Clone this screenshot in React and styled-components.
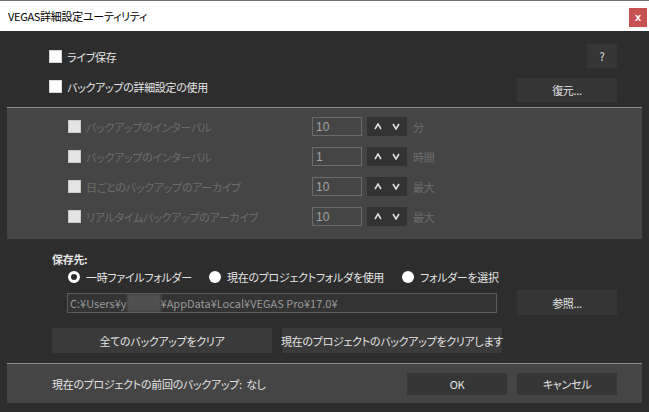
import React from "react";
import styled, { createGlobalStyle } from "styled-components";

const GlobalStyle = createGlobalStyle`
    html, body {
        margin: 0;
        padding: 0;
        background: #2d2d2d;
    }
    body {
        font-family: "Noto Sans CJK JP", "Noto Sans", sans-serif;
        font-size: 11px;
        letter-spacing: -0.3px;
        font-feature-settings: "palt";
    }
`

const Window = styled.div`
    width: 649px;
    height: 412px;
    box-sizing: border-box;
    border-top: 1px solid #717171;
    display: flex;
    flex-direction: column;
    background: #2d2d2d;
    overflow: hidden;
`

const TitleBar = styled.div`
    height: 30px;
    flex: none;
    background: #fff;
    display: flex;
    justify-content: space-between;
    align-items: flex-start;
    padding: 0 2px 0 8px;
`

const Title = styled.span`
    color: #000;
    line-height: 30px;
`

const CloseButton = styled.div`
    margin-top: 7px;
    width: 18px;
    height: 19px;
    background: #c75050;
    color: #fff;
    font-family: "Liberation Sans", sans-serif;
    font-weight: bold;
    font-size: 11px;
    display: flex;
    align-items: center;
    justify-content: center;
    padding-bottom: 2px;
    box-sizing: border-box;
`

const Content = styled.div`
    flex: 1;
    display: flex;
    flex-direction: column;
    padding-top: 13px;
`

const TopRow = styled.div`
    height: 24px;
    display: flex;
    align-items: flex-start;
    justify-content: space-between;
    padding: 0 32px 0 49px;
    & + & {
        margin-top: 10px;
    }
`

const CheckLabel = styled.label`
    display: flex;
    align-items: center;
    gap: 5px;
    height: 13px;
    margin-top: ${p => p.$top || 0}px;
    white-space: nowrap;
    color: ${p => (p.$disabled ? "#6d6d6d" : "#e4e4e4")};
`

const Box = styled.span`
    width: 13px;
    height: 13px;
    box-sizing: border-box;
    flex: none;
    background: ${p => (p.$disabled ? "#e4e4e4" : "#fff")};
    border: 1px solid ${p => (p.$disabled ? "#c9c9c9" : "#d8d8d8")};
`

const Button = styled.div`
    width: ${p => p.$w || 100}px;
    height: ${p => p.$h || 24}px;
    background: ${p => p.$bg || "#363636"};
    color: #e4e4e4;
    display: flex;
    align-items: center;
    justify-content: center;
    flex: none;
    white-space: nowrap;
`

const Panel = styled.div`
    margin: 5px 7px 0;
    background: #454545;
    border-top: 1px solid #8c8c8c;
    padding: 9px 0 13px 61px;
    display: flex;
    flex-direction: column;
    gap: 11px;
`

const PanelRow = styled.div`
    height: 19px;
    display: grid;
    grid-template-columns: 244px 55px 46px auto;
    align-items: center;
`

const NumInput = styled.div`
    width: 50px;
    height: 19px;
    box-sizing: border-box;
    border: 1px solid #6b6b6b;
    color: #a4a4a4;
    font-family: "Liberation Sans", sans-serif;
    font-size: 12px;
    letter-spacing: 0;
    padding-left: 3px;
    display: flex;
    align-items: center;
`

const Spinner = styled.div`
    width: 40px;
    height: 19px;
    background: #333;
    display: flex;
    align-items: center;
    justify-content: space-around;
    padding: 0 2px;
    box-sizing: border-box;
`

const Unit = styled.span`
    color: #6d6d6d;
`

const SectionLabel = styled.div`
    margin-top: 12px;
    padding-left: 52px;
    color: #e4e4e4;
    font-weight: bold;
    line-height: 16px;
`

const RadioRow = styled.div`
    display: flex;
    align-items: center;
    padding-left: 68px;
    margin-top: 3px;
    height: 14px;
`

const RadioItem = styled.label`
    width: ${p => p.$w}px;
    display: flex;
    align-items: center;
    gap: 6px;
    color: #e4e4e4;
    white-space: nowrap;
`

const RadioDot = styled.span`
    width: 12px;
    height: 12px;
    box-sizing: border-box;
    border-radius: 50%;
    flex: none;
    background: ${p => (p.$checked ? "#2d2d2d" : "#fff")};
    border: ${p => (p.$checked ? "3px solid #fff" : "none")};
`

const PathRow = styled.div`
    display: flex;
    align-items: center;
    gap: 20px;
    padding-left: 67px;
    margin-top: 6px;
`

const PathInput = styled.div`
    width: 430px;
    height: 20px;
    box-sizing: border-box;
    border: 1px solid #5c5c5c;
    background: #333;
    color: #9a9a9a;
    padding-left: 2px;
    letter-spacing: 0;
    display: flex;
    align-items: center;
    white-space: pre;
    overflow: hidden;
`

const Redacted = styled.span`
    display: inline-block;
    width: 34px;
    height: 18px;
    background: #505050;
    filter: blur(1px);
`

const ClearRow = styled.div`
    display: flex;
    gap: 10px;
    padding-left: 52px;
    margin-top: 13px;
`

const Footer = styled.div`
    margin: 10px 7px 0;
    height: 40px;
    box-sizing: border-box;
    background: #454545;
    border-top: 1px solid #8c8c8c;
    display: flex;
    align-items: center;
    padding: 0 25px 0 45px;
    gap: 10px;
`

const FooterText = styled.span`
    flex: 1;
    color: #e4e4e4;
    white-space: pre;
`

const Chevron = ({ down }) => (
    <svg width="8" height="7" viewBox="0 0 8 7">
        <polyline
            points={down ? "1,1 4,6 7,1" : "1,6 4,1 7,6"}
            fill="none"
            stroke="#dcdcdc"
            strokeWidth="1.6"
        />
    </svg>
)

const Check = ({ label, disabled, top }) => (
    <CheckLabel $disabled={disabled} $top={top}>
        <Box $disabled={disabled} />
        {label}
    </CheckLabel>
)

const rows = [
    { label: "バックアップのインターバル", value: "10", unit: "分" },
    { label: "バックアップのインターバル", value: "1", unit: "時間" },
    { label: "日ごとのバックアップのアーカイブ", value: "10", unit: "最大" },
    { label: "リアルタイムバックアップのアーカイブ", value: "10", unit: "最大" },
]

export default function App() {
    return (
        <>
            <GlobalStyle />
            <Window>
                <TitleBar>
                    <Title>VEGAS詳細設定ユーティリティ</Title>
                    <CloseButton>x</CloseButton>
                </TitleBar>
                <Content>
                    <TopRow>
                        <Check label="ライブ保存" top={6} />
                        <Button $w={30}>?</Button>
                    </TopRow>
                    <TopRow>
                        <Check label="バックアップの詳細設定の使用" top={2} />
                        <Button>復元...</Button>
                    </TopRow>
                    <Panel>
                        {rows.map((r, i) => (
                            <PanelRow key={i}>
                                <Check label={r.label} disabled />
                                <NumInput>{r.value}</NumInput>
                                <Spinner>
                                    <Chevron />
                                    <Chevron down />
                                </Spinner>
                                <Unit>{r.unit}</Unit>
                            </PanelRow>
                        ))}
                    </Panel>
                    <SectionLabel>保存先:</SectionLabel>
                    <RadioRow>
                        <RadioItem $w={141}>
                            <RadioDot $checked />
                            一時ファイルフォルダー
                        </RadioItem>
                        <RadioItem $w={193}>
                            <RadioDot />
                            現在のプロジェクトフォルダを使用
                        </RadioItem>
                        <RadioItem $w={120}>
                            <RadioDot />
                            フォルダーを選択
                        </RadioItem>
                    </RadioRow>
                    <PathRow>
                        <PathInput>
                            C:¥Users¥y<Redacted />¥AppData¥Local¥VEGAS Pro¥17.0¥
                        </PathInput>
                        <Button $h={25}>参照...</Button>
                    </PathRow>
                    <ClearRow>
                        <Button $w={220} $h={25} $bg="#3a3a3a">全てのバックアップをクリア</Button>
                        <Button $w={220} $h={25} $bg="#3a3a3a">現在のプロジェクトのバックアップをクリアします</Button>
                    </ClearRow>
                    <Footer>
                        <FooterText>現在のプロジェクトの前回のバックアップ:  なし</FooterText>
                        <Button $h={22}>OK</Button>
                        <Button $h={22}>キャンセル</Button>
                    </Footer>
                </Content>
            </Window>
        </>
    )
}
